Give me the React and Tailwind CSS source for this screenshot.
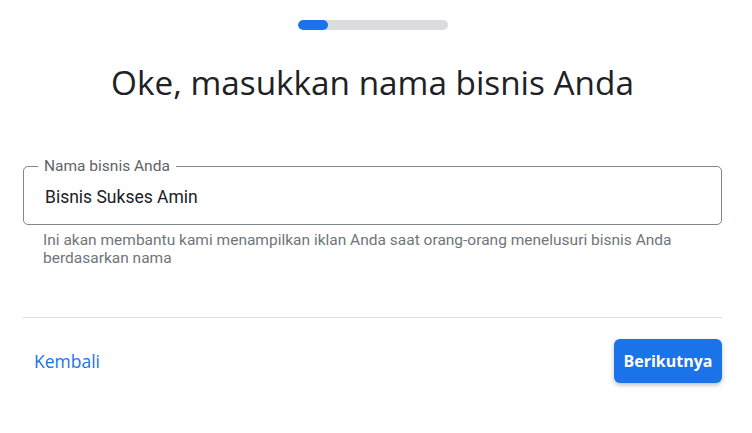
import React, { useState } from 'react';

const App = () => {
  const [name, setName] = useState('Bisnis Sukses Amin');

  return (
    <div className="w-[752px] h-[433px] bg-white pl-[23px] pr-[30px] font-['Roboto',sans-serif]">
      {/* Progress */}
      <div className="flex justify-center pt-[20px]">
        <div className="w-[150px] h-[10px] rounded-full bg-[#dadce0] overflow-hidden">
          <div className="w-[30px] h-full rounded-full bg-[#1a73e8]" />
        </div>
      </div>

      <h1 className="mt-[30px] text-center text-[33.3px] leading-[44px] text-[#202124] font-['Open_Sans',sans-serif]">
        Oke, masukkan nama bisnis Anda
      </h1>

      {/* Field */}
      <div className="mt-[62px]">
        <div className="relative h-[59px] border border-[#80868b] rounded-[5px] flex items-center px-[21px]">
          <span className="absolute -top-[10px] left-[14px] bg-white px-[6px] text-[15.5px] leading-[18px] text-[#5f6368]">
            Nama bisnis Anda
          </span>
          <input
            value={name}
            onChange={e => setName(e.target.value)}
            className="w-full mt-[2px] text-[17.5px] leading-[24px] text-[#202124] outline-none bg-transparent"
          />
        </div>
        <p className="mt-[6px] pl-[20px] pr-[40px] text-[15.5px] leading-[18px] text-[#70757a]">
          Ini akan membantu kami menampilkan iklan Anda saat orang-orang menelusuri bisnis Anda berdasarkan nama
        </p>
      </div>

      <div className="mt-[50px] border-t border-[#dadce0]" />

      <div className="mt-[21px] flex items-center justify-between">
        <button className="ml-[11px] text-[17.5px] font-medium text-[#1a73e8] font-['Open_Sans',sans-serif]">
          Kembali
        </button>
        <button className="h-[44px] w-[108px] rounded-[6px] bg-[#1a73e8] text-white text-[16px] font-bold shadow-[0_2px_4px_rgba(60,64,67,0.35)] font-['Open_Sans',sans-serif]">
          Berikutnya
        </button>
      </div>
    </div>
  );
};

export default App;
